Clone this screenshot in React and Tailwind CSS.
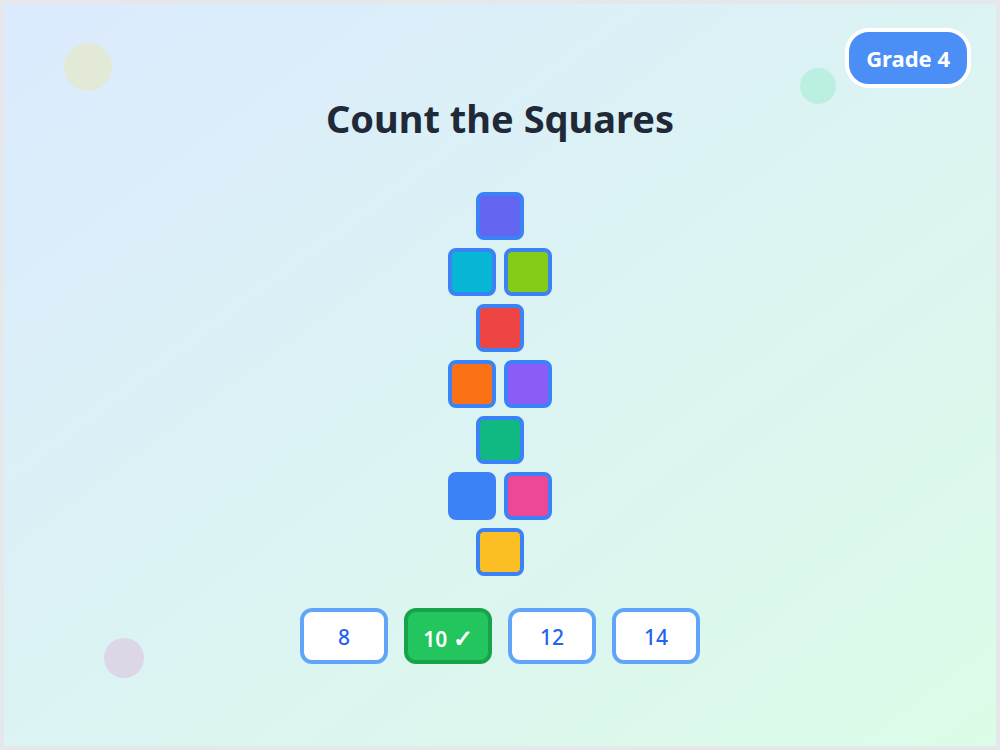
import React, { useState } from "react";

const rows = [
  [{ fill: "bg-[#6366f1]" }],
  [{ fill: "bg-[#06b6d4]" }, { fill: "bg-[#84cc16]" }],
  [{ fill: "bg-[#ef4444]" }],
  [{ fill: "bg-[#f97316]" }, { fill: "bg-[#8b5cf6]" }],
  [{ fill: "bg-[#10b981]" }],
  [{ fill: "bg-[#3b82f6]" }, { fill: "bg-[#ec4899]" }],
  [{ fill: "bg-[#fbbf24]" }],
];

const answers = [8, 10, 12, 14];

function App() {
  const [picked, setPicked] = useState(10);

  return (
    <div
      className="w-[1000px] h-[750px] border-4 border-[#e5e7eb] bg-linear-to-br from-[#dbeafe] to-[#dcfce7] relative overflow-hidden"
      style={{ fontFamily: '"Noto Sans", "Open Sans", sans-serif' }}
    >
      {/* decorative blobs */}
      <div className="absolute left-[60px] top-[39px] w-12 h-12 rounded-full bg-[#fde047] opacity-20" />
      <div className="absolute left-[796px] top-[64px] w-9 h-9 rounded-full bg-[#6ee7b7] opacity-30" />
      <div className="absolute left-[100px] top-[634px] w-10 h-10 rounded-full bg-[#dcd6e6]" />

      {/* grade badge */}
      <div className="absolute right-[25px] top-[24px] h-[60px] px-[17px] flex items-center rounded-[24px] border-4 border-white bg-[#4b8ef5] text-white text-[22px] font-bold">
        Grade 4
      </div>

      <div className="flex flex-col items-center pt-[93px]">
        <h1 className="text-[38px] leading-[42px] font-bold text-[#1f2937]">
          Count the Squares
        </h1>

        <div className="mt-[53px] flex flex-col items-center gap-2">
          {rows.map((row, i) => (
            <div key={i} className="flex gap-2">
              {row.map((sq, j) => (
                <div
                  key={j}
                  className={`w-12 h-12 rounded-lg border-4 border-[#3b82f6] ${sq.fill}`}
                />
              ))}
            </div>
          ))}
        </div>

        <div className="mt-8 flex gap-4">
          {answers.map((n) =>
            n === picked ? (
              <button
                key={n}
                onClick={() => setPicked(n)}
                className="w-[88px] h-14 pt-[3px] rounded-xl border-4 border-[#16a34a] bg-[#22c55e] text-white text-[21px] font-semibold"
              >
                {n} <span className="text-[24px]">✓</span>
              </button>
            ) : (
              <button
                key={n}
                onClick={() => setPicked(n)}
                className="w-[88px] h-14 pt-[3px] rounded-xl border-4 border-[#60a5fa] bg-white text-[#2563eb] text-[21px] font-medium"
              >
                {n}
              </button>
            )
          )}
        </div>
      </div>
    </div>
  );
}

export default App;
